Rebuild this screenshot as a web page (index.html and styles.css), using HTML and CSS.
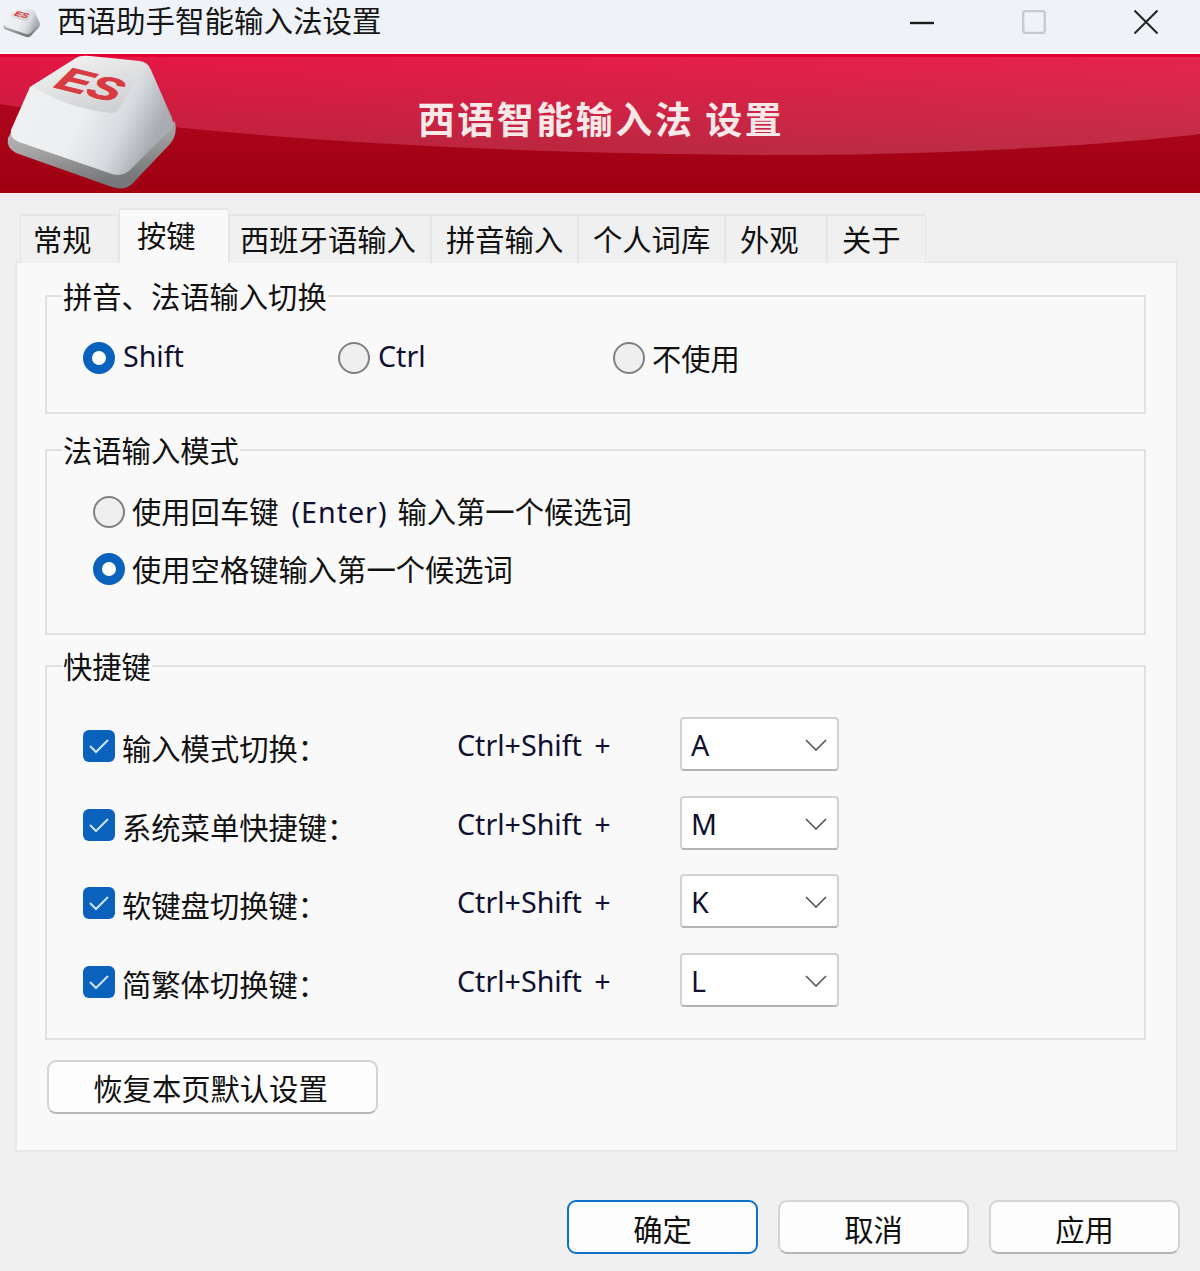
FILE: index.html
```html
<!DOCTYPE html>
<html lang="zh-CN">
<head>
<meta charset="utf-8">
<title>西语助手智能输入法设置</title>
<link rel="stylesheet" href="styles.css">
</head>
<body>
<svg class="defs" width="0" height="0" aria-hidden="true">
  <defs>
    <linearGradient id="keyBase" x1="0" y1="0" x2="0.3" y2="1">
      <stop offset="0" stop-color="#d0d0d0"/>
      <stop offset="0.6" stop-color="#a2a2a2"/>
      <stop offset="1" stop-color="#77787a"/>
    </linearGradient>
    <linearGradient id="keyBody" x1="0" y1="0" x2="1" y2="0.35">
      <stop offset="0" stop-color="#f1f1f1"/>
      <stop offset="0.55" stop-color="#eceef1"/>
      <stop offset="0.8" stop-color="#d6dade"/>
      <stop offset="1" stop-color="#a9adb3"/>
    </linearGradient>
    <linearGradient id="keyTop" x1="0" y1="0" x2="0.6" y2="1">
      <stop offset="0" stop-color="#f6f6f6"/>
      <stop offset="1" stop-color="#cfd0d2"/>
    </linearGradient>
    <symbol id="keycap" viewBox="5 54 175 138">
      <path fill="url(#keyBase)" d="M8 138 Q6 148 16 153 L112 187 Q124 191 132 184 L170 144 Q178 135 175 122 L30 100 Z"/>
      <path fill="url(#keyBody)" d="M30 87 L76 58 Q80 55 90 56 L140 61 Q148 62 151 70 L172 118 Q175 127 168 132 L130 170 Q122 177 112 174 L19 142 Q9 138 11 130 Z"/>
      <path fill="url(#keyTop)" d="M32 86 L78 58 Q81 56 90 57 L140 62 Q146 63 146 66 L119 108 Q116 114 110 113 Q66 108 32 86 Z"/>
      <text class="key-text" transform="translate(53 87) rotate(14) skewX(-18) scale(1.2 0.84)">ES</text>
    </symbol>
  </defs>
</svg>

<div class="window">
  <header class="titlebar">
    <svg class="app-icon" width="38" height="30"><use href="#keycap"/></svg>
    <span class="title">西语助手智能输入法设置</span>
    <div class="controls">
      <svg width="24" height="24" viewBox="0 0 24 24"><path d="M0 13H24" stroke="#1c1c1c" stroke-width="2.4"/></svg>
      <svg width="24" height="24" viewBox="0 0 24 24"><rect x="1.2" y="1" width="21.6" height="22" rx="2.5" fill="none" stroke="#c8cbce" stroke-width="2.4"/></svg>
      <svg width="24" height="24" viewBox="0 0 24 24"><path d="M0.5 0.5L23.5 23.5M23.5 0.5L0.5 23.5" stroke="#262626" stroke-width="2.1"/></svg>
    </div>
  </header>

  <section class="banner">
    <svg class="banner-art" viewBox="0 0 1200 139" preserveAspectRatio="none" aria-hidden="true">
      <defs>
        <linearGradient id="gloss" x1="0" y1="0" x2="0" y2="1">
          <stop offset="0" stop-color="#e61644"/>
          <stop offset="1" stop-color="#b8213a"/>
        </linearGradient>
        <linearGradient id="glossR" x1="0" y1="0" x2="1" y2="0">
          <stop offset="0" stop-color="#fff" stop-opacity="0"/>
          <stop offset="1" stop-color="#fff" stop-opacity="0.06"/>
        </linearGradient>
        <linearGradient id="deep" x1="0" y1="0" x2="0" y2="1">
          <stop offset="0" stop-color="#b70a24"/>
          <stop offset="1" stop-color="#9e0010"/>
        </linearGradient>
      </defs>
      <rect width="1200" height="139" fill="url(#deep)"/>
      <path fill="url(#gloss)" d="M0 50 C200 84 500 101 800 101 C950 100 1100 92 1200 80 V0 H0 Z"/>
      <path fill="url(#glossR)" d="M0 50 C200 84 500 101 800 101 C950 100 1100 92 1200 80 V0 H0 Z"/>
      <rect width="1200" height="3" fill="#e6002f"/>
      <rect y="136" width="1200" height="3" fill="#a5000f"/>
    </svg>
    <svg class="banner-key" width="175" height="138"><use href="#keycap"/></svg>
    <h1 class="banner-title">西语智能输入法 设置</h1>
  </section>

  <main class="content">
    <nav class="tabs">
      <div class="tab tab-w99 tab-first">常规</div>
      <div class="tab tab-on">按键</div>
      <div class="tab tab-w202">西班牙语输入</div>
      <div class="tab tab-w147">拼音输入</div>
      <div class="tab tab-w147">个人词库</div>
      <div class="tab tab-w102">外观</div>
      <div class="tab tab-w99">关于</div>
    </nav>

    <div class="panel">
      <fieldset class="group group-switch">
        <legend>拼音、法语输入切换</legend>
        <div class="radio-row">
          <label class="opt opt-shift"><span class="radio on"></span><span class="lat">Shift</span></label>
          <label class="opt opt-ctrl"><span class="radio"></span><span class="lat">Ctrl</span></label>
          <label class="opt"><span class="radio"></span><span class="opt-text">不使用</span></label>
        </div>
      </fieldset>

      <fieldset class="group group-mode">
        <legend>法语输入模式</legend>
        <div class="radio-col">
          <label class="opt"><span class="radio"></span><span class="opt-text">使用回车键<span class="lat enter">(Enter)</span>输入第一个候选词</span></label>
          <label class="opt"><span class="radio on"></span><span class="opt-text">使用空格键输入第一个候选词</span></label>
        </div>
      </fieldset>

      <fieldset class="group group-keys">
        <legend>快捷键</legend>
        <div class="keys">
          <label class="opt key-opt"><span class="check"><svg width="20" height="20" viewBox="0 0 20 20"><path d="M1 10L7 16L19 4" fill="none" stroke="#cfe3f6" stroke-width="2"/></svg></span><span class="key-label">输入模式切换：</span></label>
          <span class="lat combo">Ctrl+Shift +</span>
          <div class="select"><span class="lat">A</span><svg width="22" height="12" viewBox="0 0 22 12"><path d="M1 1L11 11L21 1" fill="none" stroke="#555" stroke-width="1.6"/></svg></div>

          <label class="opt key-opt"><span class="check"><svg width="20" height="20" viewBox="0 0 20 20"><path d="M1 10L7 16L19 4" fill="none" stroke="#cfe3f6" stroke-width="2"/></svg></span><span class="key-label">系统菜单快捷键：</span></label>
          <span class="lat combo">Ctrl+Shift +</span>
          <div class="select"><span class="lat">M</span><svg width="22" height="12" viewBox="0 0 22 12"><path d="M1 1L11 11L21 1" fill="none" stroke="#555" stroke-width="1.6"/></svg></div>

          <label class="opt key-opt"><span class="check"><svg width="20" height="20" viewBox="0 0 20 20"><path d="M1 10L7 16L19 4" fill="none" stroke="#cfe3f6" stroke-width="2"/></svg></span><span class="key-label">软键盘切换键：</span></label>
          <span class="lat combo">Ctrl+Shift +</span>
          <div class="select"><span class="lat">K</span><svg width="22" height="12" viewBox="0 0 22 12"><path d="M1 1L11 11L21 1" fill="none" stroke="#555" stroke-width="1.6"/></svg></div>

          <label class="opt key-opt"><span class="check"><svg width="20" height="20" viewBox="0 0 20 20"><path d="M1 10L7 16L19 4" fill="none" stroke="#cfe3f6" stroke-width="2"/></svg></span><span class="key-label">简繁体切换键：</span></label>
          <span class="lat combo">Ctrl+Shift +</span>
          <div class="select"><span class="lat">L</span><svg width="22" height="12" viewBox="0 0 22 12"><path d="M1 1L11 11L21 1" fill="none" stroke="#555" stroke-width="1.6"/></svg></div>
        </div>
      </fieldset>

      <button class="btn btn-reset" type="button">恢复本页默认设置</button>
    </div>

    <footer class="footer">
      <button class="btn btn-foot btn-primary" type="button">确定</button>
      <button class="btn btn-foot" type="button">取消</button>
      <button class="btn btn-foot" type="button">应用</button>
    </footer>
  </main>
</div>
</body>
</html>
```

FILE: styles.css
```css
* { box-sizing: border-box; }

html, body { margin: 0; padding: 0; }

body {
  width: 1200px;
  height: 1271px;
  overflow: hidden;
  background: #f0f0f0;
  color: #111;
  font-family: "Noto Sans CJK SC", "Noto Sans", sans-serif;
  font-size: 29.3px;
  line-height: 36px;
}

.defs { display: block; height: 0; }

.key-text {
  font-family: "Liberation Sans", sans-serif;
  font-weight: 700;
  font-style: italic;
  font-size: 40px;
  fill: #d73a40;
  stroke: #d73a40;
  stroke-width: 1px;
}

.lat {
  font-family: "Noto Sans", sans-serif;
  font-size: 28.6px;
  color: #101030;
}

.enter {
  margin: 0 10px 0 13px;
  letter-spacing: 1px;
}

/* title bar */
.titlebar {
  height: 54px;
  display: flex;
  align-items: center;
  background: #eff3f8;
  border-bottom: 2px solid #fff;
  padding: 0 42px 8px 3px;
}

.app-icon { flex: none; margin-top: 2px; }

.title {
  margin: 0 0 6px 16px;
  font-size: 29.5px;
  color: #161616;
}

.controls {
  margin-left: auto;
  display: flex;
  gap: 88px;
  align-items: center;
}

/* banner */
.banner {
  position: relative;
  height: 139px;
  display: flex;
  align-items: center;
  justify-content: center;
}

.banner-art {
  position: absolute;
  inset: 0;
  width: 100%;
  height: 100%;
}

.banner-key {
  position: absolute;
  left: 5px;
  top: 0;
}

.banner-title {
  position: relative;
  margin: 0 0 12px 2px;
  font-size: 37px;
  line-height: 44px;
  font-weight: 700;
  letter-spacing: 2.5px;
  color: #f8e8e8;
}

/* tabs */
.content { padding: 15px 20px 0 15px; }

.tabs {
  display: flex;
  align-items: flex-end;
  height: 55px;
  padding-left: 5px;
  margin-bottom: -2px;
  position: relative;
  z-index: 1;
}

.tab {
  height: 49px;
  padding: 4px 0 0 14px;
  border: 2px solid #e6e6e6;
  border-bottom: 0;
  border-left-width: 1px;
  border-right-width: 1px;
  background: #f0f0f0;
  line-height: 36px;
  white-space: nowrap;
}

.tab-first { padding-left: 12px; }
.tab-w99 { width: 99px; }
.tab-w102 { width: 102px; }
.tab-w147 { width: 147px; }
.tab-w202 { width: 202px; padding-left: 10px; }

.tab-on {
  width: 110px;
  height: 55px;
  padding: 4px 0 0 17px;
  background: #f9f9f9;
  border-bottom: 2px solid #f9f9f9;
  line-height: 40px;
}

/* panel */
.panel {
  height: 891px;
  margin-right: 2px;
  padding: 15px 30px 0 28px;
  border: 2px solid #e8e8e8;
  background: #f9f9f9;
}

.group {
  margin: 0;
  padding: 0;
  min-width: 0;
  border: 2px solid #e0e0e0;
}

.group legend {
  padding: 0 1px;
  height: 36px;
  line-height: 34px;
}

.group-switch { margin-bottom: 18px; padding: 28px 0 38px 36px; }
.group-mode { margin-bottom: 13px; padding: 28px 0 48px 46px; }
.group-keys { margin-bottom: 20px; padding: 33px 0 31px 36px; }

.group-switch legend { margin-left: -21px; }
.group-mode legend { margin-left: -31px; }
.group-keys legend { margin-left: -21px; }

.opt {
  display: flex;
  align-items: center;
  gap: 7px;
  height: 32px;
  white-space: nowrap;
}

.opt > .lat { margin: 0 0 4px 1px; }

.opt-text { margin-bottom: 2px; }

.radio-row { display: flex; }
.opt-shift { width: 255px; }
.opt-ctrl { width: 275px; }

.radio-col {
  display: flex;
  flex-direction: column;
  gap: 25px;
}

.radio {
  flex: none;
  width: 32px;
  height: 32px;
  border-radius: 50%;
  border: 2.5px solid #808080;
  background: #efefef;
}

.radio.on {
  border: 9.5px solid #0a62bd;
  background: #fff;
}

.check {
  flex: none;
  width: 32px;
  height: 32px;
  border-radius: 6px;
  background: #0a62bd;
  display: flex;
  align-items: center;
  justify-content: center;
}

.key-opt { margin-top: 4px; }

.key-label { margin-top: 2px; }

.combo {
  margin-top: 2px;
  word-spacing: 5px;
}

.keys {
  display: grid;
  grid-template-columns: 374px 223px 159px;
  grid-auto-rows: 54px;
  row-gap: 24.5px;
  align-items: center;
}

.select {
  height: 54px;
  display: flex;
  align-items: center;
  justify-content: space-between;
  padding: 2px 10px 0 9px;
  background: #fff;
  border: 2px solid #d2d2d2;
  border-bottom-color: #b4b4b4;
  border-radius: 4px;
}

/* buttons */
.btn {
  display: block;
  padding: 2px 0 0;
  height: 54px;
  font: inherit;
  color: #111;
  background: #fdfdfd;
  border: 2px solid #d4d4d4;
  border-bottom-color: #b6b6b6;
  border-radius: 9px;
}

.btn-reset {
  width: 331px;
  margin-left: 2px;
  padding: 0 4px 0 0;
}

.footer {
  display: flex;
  justify-content: flex-end;
  gap: 20px;
  margin-top: 48px;
}

.btn-foot { width: 191px; }

.btn-primary { border-color: #0f72c9; }
```
